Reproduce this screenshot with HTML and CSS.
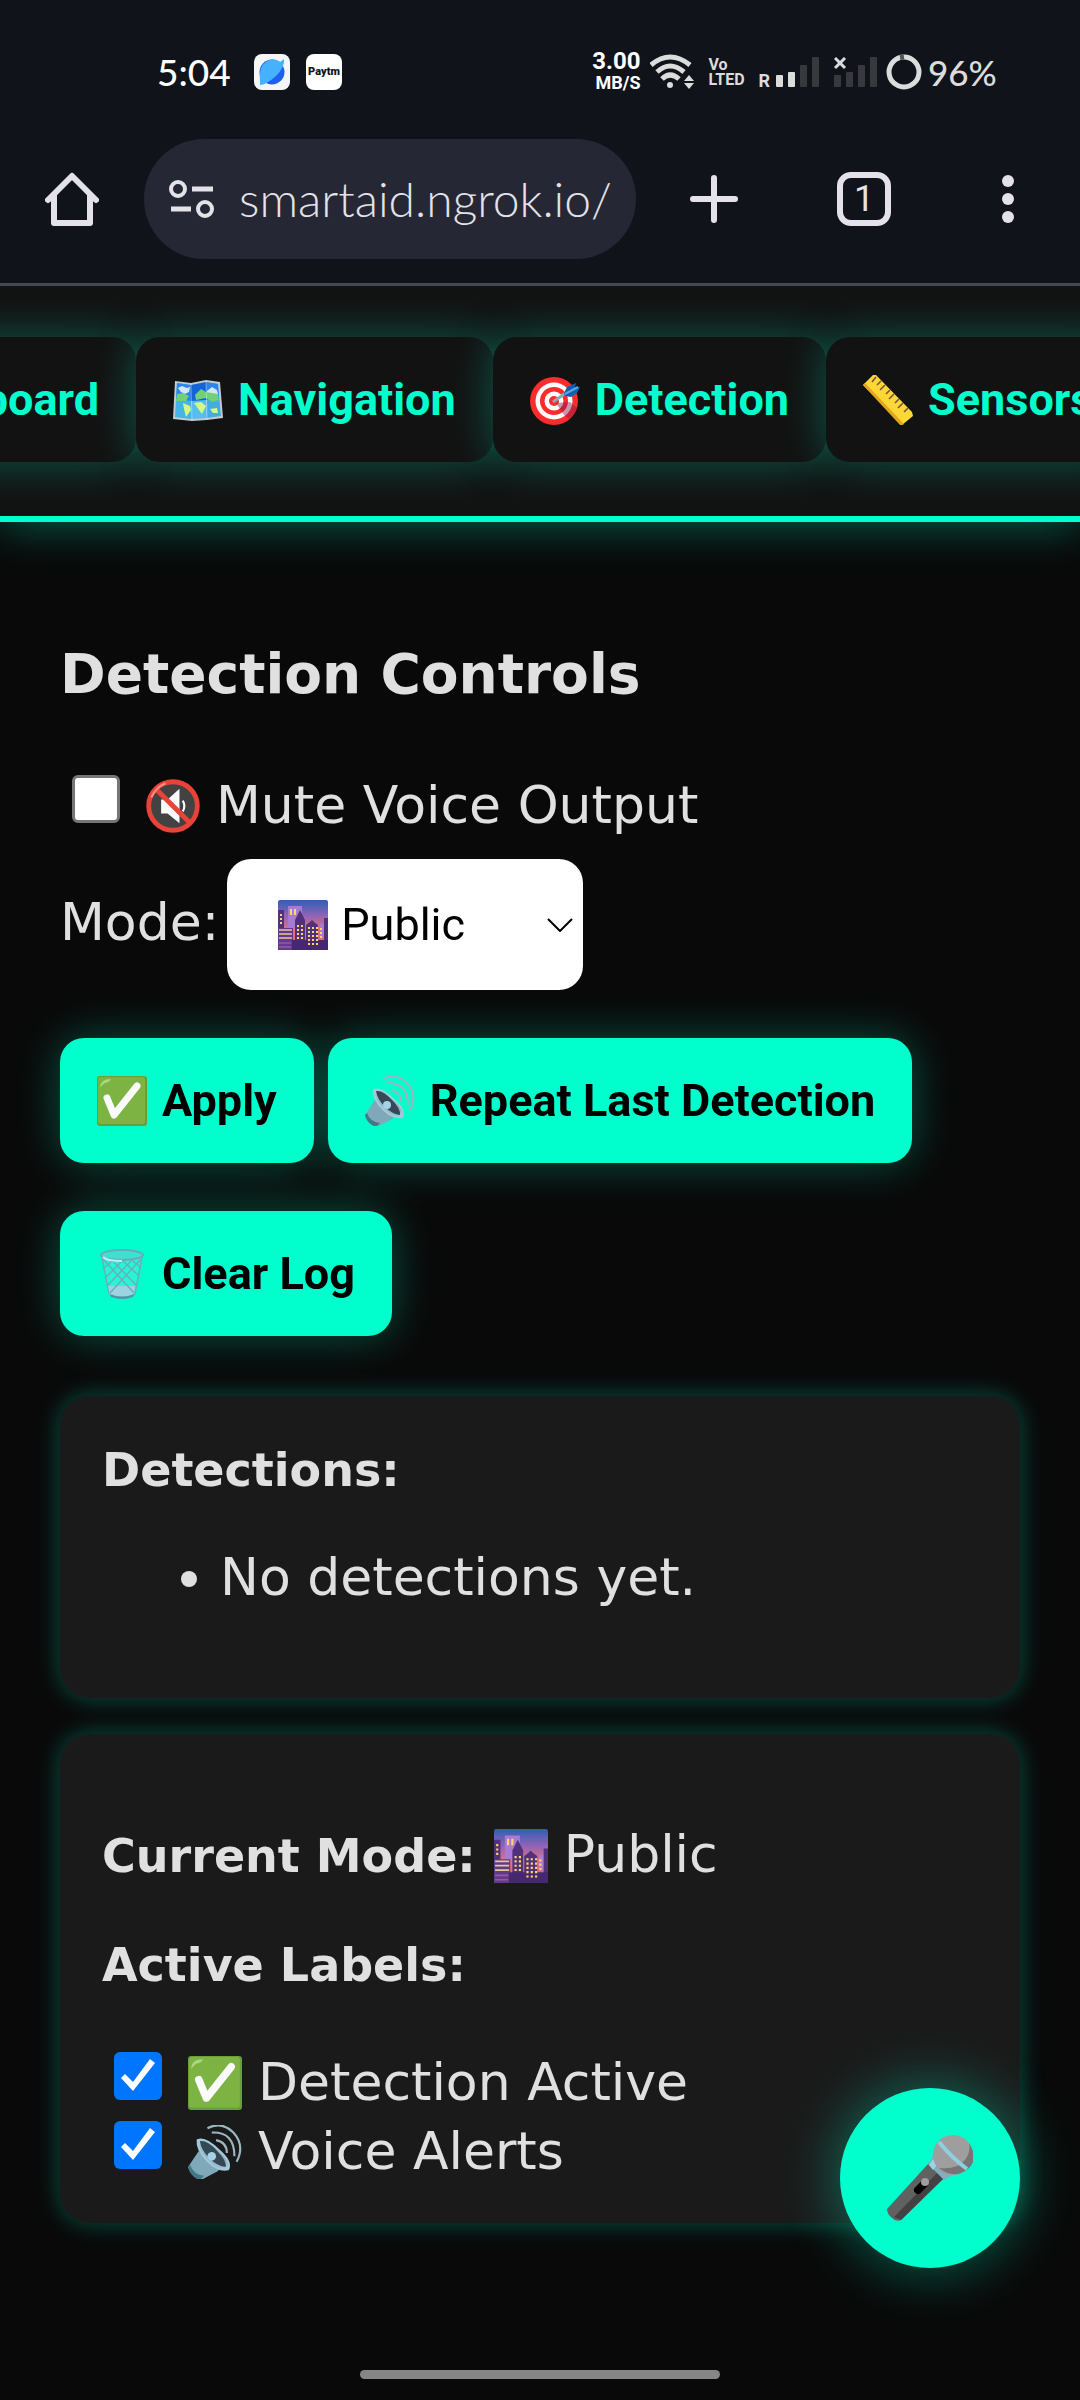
FILE: index.html
```html
<!DOCTYPE html>
<html lang="en">
<head>
<meta charset="utf-8">
<meta name="viewport" content="width=device-width, initial-scale=1">
<title>Detection Controls</title>
<link rel="stylesheet" href="styles.css">
</head>
<body>
<svg class="sprite" aria-hidden="true">
  <defs>
    <linearGradient id="sky" x1="0" y1="0" x2="0" y2="1">
      <stop offset="0" stop-color="#2f5fb3"/><stop offset=".3" stop-color="#8b63b8"/><stop offset=".6" stop-color="#e8707f"/><stop offset="1" stop-color="#d65f70"/>
    </linearGradient>
    <linearGradient id="cone" x1="0" y1="1" x2="1" y2="0">
      <stop offset="0" stop-color="#5b8da0"/><stop offset=".5" stop-color="#a8cbdb"/><stop offset="1" stop-color="#2f4550"/>
    </linearGradient>
  </defs>
  <symbol id="map" viewBox="0 0 50 50">
    <path d="M2 6 18 8 33 5 47 7 50 43 34 45 19 46 0 44Z" fill="#c3cbd0"/>
    <path d="M4 8 18 10 18 44 2 42Z" fill="#42b4e6"/><path d="M18 10 33 7 34 43 18 44Z" fill="#56bdf0"/><path d="M33 7 45 9 48 41 34 43Z" fill="#42aee0"/>
    <path d="M4 8 18 10V26L3 24Z" fill="#2c83ea"/><path d="M18 10 33 7V25L18 26Z" fill="#1464d8"/><path d="M33 7 45 9 46 24 33 25Z" fill="#2c83ea"/>
    <path d="M5 13 9 11 14 13 17 12 16 17 12 19 8 17ZM34 16 39 12 44 15 45 19 34 19Z" fill="#d5e7f5"/>
    <path d="M4 19 10 18 16 21 13 26H3ZM22 20 28 14 33 17 45 19 46 25 39 27 33 23 23 25Z" fill="#72cf7a"/>
    <path d="M10 28 17 31 18 35 13 42 11 34ZM21 28 28 27 33 31 29 39 26 35ZM37 34 44 33 45 38 40 38Z" fill="#d4f982"/>
    <path d="M18 9 19 45M33 6 34 44" stroke="#ffffff" stroke-opacity=".35" fill="none"/>
  </symbol>
  <symbol id="target" viewBox="0 0 50 50">
    <circle cx="24" cy="26" r="24" fill="#fb2c2c"/><circle cx="24" cy="26" r="18.5" fill="#fff"/><circle cx="24" cy="26" r="14" fill="#fb2c2c"/><circle cx="24" cy="26" r="9.5" fill="#fff"/><circle cx="24" cy="26" r="5" fill="#fb2c2c"/>
    <path d="M26 28 34 40 39 44Q45 40 47 33L40 27Z" fill="#851747" opacity=".45"/>
    <path d="M23 27 40 15" stroke="#8ca9b4" stroke-width="3"/>
    <path d="M34 18 37 12 46 8 45 12 50 12 47 18 41 22 35 21Z" fill="#0b61ac"/><path d="M35 19 48 12" stroke="#56a6e8" stroke-width="2"/>
  </symbol>
  <symbol id="ruler" viewBox="0 0 50 50">
    <path d="M10 0 0 10 39 50 50 41 49 37 13 0Z" fill="#fdd835"/><path d="M0 10 38 51 41 49 2 8Z" fill="#e2a61e"/>
    <path d="M13 2 9 7M18 6 14 10M22 10 17 15M27 15 23 19M31 19 26 24M36 24 32 28M40 28 35 33M45 33 41 37" stroke="#765548" stroke-width="1.6"/>
  </symbol>
  <symbol id="mute" viewBox="0 0 50 50">
    <circle cx="25" cy="25" r="22.5" fill="#424242" stroke="#e84339" stroke-width="4.5"/>
    <path d="M14 19H20L31 9V41L20 32H14Z" fill="#fafafa"/><path d="M34 20Q37 25 34 30" fill="none" stroke="#fafafa" stroke-width="2"/>
    <path d="M9 9 41 41" stroke="#e84339" stroke-width="4.5"/><path d="M5 17Q9 8 18 4" fill="none" stroke="#ff8a80" stroke-width="2"/>
  </symbol>
  <symbol id="city" viewBox="0 0 50 50">
    <rect width="50" height="50" rx="2" fill="url(#sky)"/>
    <path d="M10 6H24V28H10ZM42 24H47V38H42Z" fill="#a77bd4"/>
    <path d="M0 10H6V50H0ZM17 20 20 14 22 10 24 14 27 20V50H17ZM28 25 32 22 34 20 36 22 40 25V50H28ZM46 18H50V50H46Z" fill="#51307c"/>
    <path d="M0 28H15V50H0Z" fill="#633a87"/><path d="M14 40H50V50H14Z" fill="#46286f"/>
    <path d="M1 30H14M1 34H14M1 38H14" stroke="#e6c69d" stroke-width="1.6"/><path d="M1 43H13M1 47H13" stroke="#9557b0" stroke-width="1.6"/>
    <path d="M12 9H14V15H12ZM16 9H18V15H16Z" fill="#ffd66c"/>
    <path d="M20 25V40M24 25V40M31 27V46M35 27V46M39 27V46M43 28V38M3 14V26" stroke="#ffd66c" stroke-width="2" stroke-dasharray="2 2"/>
  </symbol>
  <symbol id="check" viewBox="0 0 50 50">
    <rect width="50" height="50" rx="3" fill="#689f38"/><rect x="1" y="1" width="47" height="47" rx="3" fill="#7cb342"/>
    <path d="M3 12Q3 3 14 3Q13 6 8 7Q6 8 3 12Z" fill="#aed581"/>
    <path d="M10 22 17 39 40 10" fill="none" stroke="#fafafa" stroke-width="7" stroke-linecap="round" stroke-linejoin="round"/>
  </symbol>
  <symbol id="speaker" viewBox="0 0 50 50">
    <path d="M10 24 32 39 27 43 12 51Q3 47 0 39Z" fill="#7fa8b8"/><path d="M2 37Q5 46 15 47L11 51Q2 48 0 39Z" fill="#447789"/>
    <path d="M9 14Q16 11 28 23Q41 34 37 41Q28 43 18 33Q8 23 9 14Z" fill="url(#cone)" stroke="#a5c9d9" stroke-width="2"/>
    <path d="M11 15Q18 14 27 24Q36 33 35 39Q27 38 20 31Q12 23 11 15Z" fill="#344955"/><circle cx="22" cy="29" r="4" fill="#a5d2e5"/>
    <path d="M26 14Q36 16 36 26M22 7Q43 6 43 29M18 3Q31-4 42 7Q53 19 45 34" fill="none" stroke="#9bb6c1" stroke-width="2"/>
  </symbol>
  <symbol id="trash" viewBox="0 0 50 50">
    <path d="M5 8 12 45Q25 53 38 45L45 8" fill="#80deea" fill-opacity=".3" stroke="#6aaebd" stroke-width="1.5"/>
    <path d="M11 37 38 37 37 46Q25 52 13 46Z" fill="#9bd3e2"/>
    <path d="M6 10 37 44M14 10 40 37M24 10 42 27M34 10 44 19M44 10 13 44M36 10 10 37M27 10 8 29M17 10 6 20" stroke="#6aaebd" stroke-width="1.4"/>
    <path d="M13 45Q25 50 37 45L36 48Q25 52 14 48Z" fill="#4a98aa"/>
    <ellipse cx="25" cy="6" rx="21" ry="5" fill="#41dfcf" stroke="#66acba" stroke-width="2"/><path d="M6 8Q10 12 25 12" fill="none" stroke="#b8eff3" stroke-width="2"/>
  </symbol>
  <symbol id="mic" viewBox="0 0 86 86">
    <path d="M42 28 57 43 14 85Q9 87 5 83 0 79 0 74Z" fill="#616161"/><path d="M50 38 57 43 14 85 7 82Z" fill="#424242"/>
    <path d="M37 49 31 55" stroke="#000" stroke-width="8" stroke-linecap="round"/><circle cx="38" cy="47" r="4" fill="#9e9e9e"/>
    <path d="M46 21 66 40 57 45 41 29Z" fill="#82aec0"/><path d="M46 24 51 29 46 35 42 30Z" fill="#9ad4e6"/>
    <circle cx="66" cy="20" r="20" fill="#9e9e9e"/><path d="M82 8Q94 28 76 37 65 43 52 33 70 35 78 25 84 17 82 8Z" fill="#757575"/>
    <path d="M52 7Q65 23 80 34" fill="none" stroke="#90cfe0" stroke-width="4"/>
  </symbol>
</svg>

<header class="browser">
  <div class="status">
    <span class="clock">5:04</span>
    <svg class="app" viewBox="0 0 36 36"><rect width="36" height="36" rx="8" fill="#f5f5f5"/><circle cx="18" cy="18" r="12.500" fill="#1f5fee"/><path d="M6 27Q4 13 13 7 20 3 26 8L30 5Q31 13 22 22 12 31 6 31Z" fill="#46b1ff"/></svg>
    <span class="app paytm">Paytm</span>
    <span class="spacer"></span>
    <span class="speed"><b>3.00</b><b class="unit">MB/S</b></span>
    <svg class="wifi" viewBox="0 0 44 36"><g fill="none" stroke="#dcdcdc" stroke-width="5"><path d="M1 11Q20-5 40 11"/><path d="M7 18Q20 6 34 18"/><path d="M12 25Q20 17 29 25"/></g><circle cx="20" cy="31" r="3" fill="#dcdcdc"/><path d="M34 27 39 21 44 27ZM34 29H44L39 35Z" fill="#dcdcdc"/></svg>
    <span class="volte"><b>Vo</b><b>LTED</b></span>
    <span class="roam">R</span>
    <svg class="bars" viewBox="0 0 44 30"><g fill="#dcdcdc"><rect y="18" width="7" height="12" rx="1"/><rect x="12" y="15" width="7" height="15" rx="1"/></g><g fill="#38393d"><rect x="24" y="8" width="7" height="22" rx="1"/><rect x="36" width="7" height="30" rx="1"/></g></svg>
    <svg class="bars" viewBox="0 0 44 30"><g fill="#38393d"><rect y="18" width="7" height="12" rx="1"/><rect x="12" y="15" width="7" height="15" rx="1"/><rect x="24" y="8" width="7" height="22" rx="1"/><rect x="36" width="7" height="30" rx="1"/></g><path d="M1 1 11 11M11 1 1 11" stroke="#dcdcdc" stroke-width="3"/></svg>
    <svg class="ring" viewBox="0 0 36 36"><circle cx="18" cy="18" r="15" fill="none" stroke="#dcdcdc" stroke-width="5"/><path d="M14 3.500 18 3" stroke="#55565a" stroke-width="5"/></svg>
    <span class="battery">96%</span>
  </div>
  <div class="toolbar">
    <button class="tool home" aria-label="Home"><svg width="54" height="54" viewBox="0 0 54 54"><path d="M3 28 27 4 51 28M9 23V51H45V23" fill="none" stroke="#e4e2e8" stroke-width="6" stroke-linecap="round" stroke-linejoin="round"/></svg></button>
    <div class="address">
      <svg width="46" height="40" viewBox="0 0 46 40"><g fill="none" stroke="#e4e2e8"><circle cx="9" cy="10" r="7" stroke-width="4"/><circle cx="36" cy="30" r="7" stroke-width="4"/><path d="M23 10H44M2 30H22" stroke-width="5"/></g></svg>
      <input class="url" type="text" value="smartaid.ngrok.io/" aria-label="Address">
    </div>
    <button class="tool add" aria-label="New tab"><svg width="48" height="48" viewBox="0 0 48 48"><path d="M24 3V45M3 24H45" stroke="#e4e2e8" stroke-width="6" stroke-linecap="round"/></svg></button>
    <button class="tool" aria-label="Tabs"><span class="tabs">1</span></button>
    <button class="tool" aria-label="Menu"><svg width="12" height="48" viewBox="0 0 12 48"><g fill="#e4e2e8"><circle cx="6" cy="6" r="6"/><circle cx="6" cy="24" r="6"/><circle cx="6" cy="42" r="6"/></g></svg></button>
  </div>
</header>

<nav class="nav">
  <button class="btn tab first">Dashboard</button>
  <button class="btn tab"><svg class="emoji"><use href="#map"/></svg>Navigation</button>
  <button class="btn tab"><svg class="emoji"><use href="#target"/></svg>Detection</button>
  <button class="btn tab"><svg class="emoji"><use href="#ruler"/></svg>Sensors</button>
</nav>

<main class="main">
  <h2 class="title">Detection Controls</h2>
  <label class="option"><input type="checkbox"><svg class="emoji big"><use href="#mute"/></svg>Mute Voice Output</label>
  <div class="mode">
    <label for="mode">Mode:</label>
    <span class="picker">
      <select id="mode"><option>Public</option></select>
      <svg class="emoji picked"><use href="#city"/></svg>
      <svg class="chevron" viewBox="0 0 26 14"><path d="M1 1 13 13 25 1" fill="none" stroke="#000" stroke-width="2"/></svg>
    </span>
  </div>
  <div class="actions">
    <button class="btn action"><svg class="emoji"><use href="#check"/></svg>Apply</button>
    <button class="btn action"><svg class="emoji"><use href="#speaker"/></svg>Repeat Last Detection</button>
    <button class="btn action"><svg class="emoji"><use href="#trash"/></svg>Clear Log</button>
  </div>
  <section class="card">
    <h3 class="label">Detections:</h3>
    <ul class="log"><li>No detections yet.</li></ul>
  </section>
  <section class="card">
    <p class="current"><strong class="label">Current Mode:</strong><svg class="emoji big"><use href="#city"/></svg>Public</p>
    <h3 class="label active">Active Labels:</h3>
    <label class="option"><input type="checkbox" checked><svg class="emoji big"><use href="#check"/></svg>Detection Active</label>
    <label class="option"><input type="checkbox" checked><svg class="emoji big"><use href="#speaker"/></svg>Voice Alerts</label>
  </section>
</main>

<button class="fab" aria-label="Voice command"><svg width="86" height="86"><use href="#mic"/></svg></button>
<div class="gesture"></div>
</body>
</html>
```
FILE: styles.css
```css
* { box-sizing: border-box; }

body {
  margin: 0;
  min-height: 100vh;
  background: #090909;
  color: #e0e0e0;
  font: 52px/69px "DejaVu Sans", sans-serif;
}

button { border: 0; padding: 0; font-family: inherit; cursor: pointer; }
svg { flex: none; }
.sprite { position: absolute; width: 0; height: 0; }

/* Browser chrome */
.browser {
  position: relative;
  z-index: 1;
  padding: 53px 0 24px;
  background: #10131a;
  border-bottom: 3px solid #464850;
}
.status {
  display: flex;
  align-items: center;
  height: 38px;
  margin-bottom: 48px;
  padding: 0 86px 0 157px;
  color: #dcdcdc;
  line-height: 38px;
  font-family: Lato, sans-serif;
}
.clock { width: 97px; color: #fff; font-size: 37px; font-weight: 500; }
.app { width: 36px; height: 36px; margin-right: 16px; }
.paytm {
  border-radius: 8px;
  background: #fff;
  color: #10131a;
  font: 900 11px/36px Roboto, sans-serif;
  text-align: center;
}
.spacer { flex: 1; }
.speed {
  display: flex;
  flex-direction: column;
  align-items: flex-end;
  gap: 2px;
  margin-right: 10px;
  color: #fff;
  font: 24px/20px Roboto, sans-serif;
}
.speed .unit { font-size: 18px; }
.wifi { width: 44px; height: 36px; margin-right: 14px; }
.volte {
  display: flex;
  flex-direction: column;
  width: 36px;
  font: 16px/15px Roboto, sans-serif;
}
.roam { margin: 18px 6px 0 14px; font: 700 18px/20px Roboto, sans-serif; }
.bars { width: 44px; height: 30px; margin-right: 14px; }
.bars + .bars { margin-right: 8px; }
.ring { width: 36px; height: 36px; margin-right: 6px; }
.battery { width: 66px; font-size: 35px; font-weight: 500; }

.toolbar { display: flex; align-items: center; }
.tool {
  display: flex;
  flex: none;
  align-items: center;
  justify-content: center;
  width: 144px;
  height: 120px;
  background: none;
}
.tool.add { width: 156px; }
.tabs {
  width: 54px;
  height: 54px;
  border: 6px solid #e4e2e8;
  border-radius: 14px;
  color: #e4e2e8;
  font: 36px/42px Roboto, sans-serif;
  text-align: center;
}
.address {
  display: flex;
  flex: 1;
  align-items: center;
  gap: 24px;
  min-width: 0;
  height: 120px;
  padding: 0 20px 0 25px;
  border-radius: 60px;
  background: #252834;
}
.url {
  flex: 1;
  min-width: 0;
  padding: 0;
  border: 0;
  outline: 0;
  background: none;
  color: #e4e2e8;
  font: 300 48px/60px Lato, sans-serif;
}

/* Section tabs */
.nav {
  display: flex;
  overflow-x: auto;
  scrollbar-width: none;
  padding: 51px 0 54px;
  border-bottom: 6px solid #00ffcc;
  background: #121212;
  box-shadow: 0 0 45px rgba(0, 255, 204, .4);
}
.btn {
  display: flex;
  flex: none;
  align-items: center;
  gap: 15px;
  height: 125px;
  padding: 0 37px;
  border-radius: 24px;
  font: 700 45px/60px Roboto, sans-serif;
}
.tab {
  background: #121212;
  color: #00ffcc;
  box-shadow: 0 0 45px rgba(0, 255, 204, .3);
}
.tab.first { justify-content: flex-end; width: 356px; margin-left: -220px; }
.emoji { width: 50px; height: 50px; overflow: visible; }

/* Page content */
.main { padding: 112px 60px 180px; }
.title { margin: 0 0 57px; font-size: 55px; line-height: 80px; }
.option { display: flex; align-items: baseline; margin-left: 12px; }
.option input {
  flex: none;
  width: 48px;
  height: 48px;
  margin: 0 26px 0 0;
  border: 3px solid #767676;
  border-radius: 6px;
  appearance: none;
  background: #fff;
}
.option input:checked { border: 0; background: #0075ff; }
.option input:checked::after {
  content: "";
  display: block;
  width: 48px;
  height: 48px;
  background: #fff;
  clip-path: polygon(7px 26px, 11px 22px, 19px 30px, 36px 7px, 41px 11px, 19px 39px);
}
.emoji.big { align-self: center; width: 54px; height: 54px; margin-right: 16px; }
.mode { display: flex; align-items: baseline; gap: 8px; margin-top: 19px; }
.picker { position: relative; }
.picker select {
  display: block;
  width: 356px;
  height: 131px;
  padding: 0 48px 0 114px;
  border: 0;
  border-radius: 24px;
  appearance: none;
  background: #fff;
  color: #000;
  font: 45px/60px Roboto, sans-serif;
}
.picked { position: absolute; left: 51px; top: 41px; pointer-events: none; }
.chevron {
  position: absolute;
  right: 10px;
  top: 59px;
  width: 26px;
  height: 14px;
  pointer-events: none;
}
.actions { display: flex; flex-wrap: wrap; gap: 48px 14px; margin: 48px 0 60px; }
.action {
  background: #00ffcc;
  color: #000;
  box-shadow: 0 0 45px rgba(0, 255, 204, .3);
}

.card {
  margin-bottom: 36px;
  padding: 40px 42px 37px;
  border-radius: 30px;
  background: #1a1a1a;
  box-shadow: 0 0 24px rgba(0, 255, 204, .3);
}
.label { margin: 0; font-size: 46px; font-weight: 700; line-height: 69px; }
.log { margin: 38px 0 49px; padding-left: 118px; }
.current { display: flex; align-items: baseline; margin: 46px 0 40px; }
.current .label { margin-right: 18px; }
.active { margin-bottom: 48px; }

.fab {
  position: fixed;
  right: 60px;
  bottom: 132px;
  display: grid;
  place-items: center;
  width: 180px;
  height: 180px;
  border-radius: 50%;
  background: #00ffcc;
  box-shadow: 0 0 60px rgba(0, 255, 204, .4);
}
.gesture {
  position: fixed;
  bottom: 21px;
  left: 33.3333%;
  right: 33.3333%;
  height: 9px;
  border-radius: 5px;
  background: #868686;
}
```
